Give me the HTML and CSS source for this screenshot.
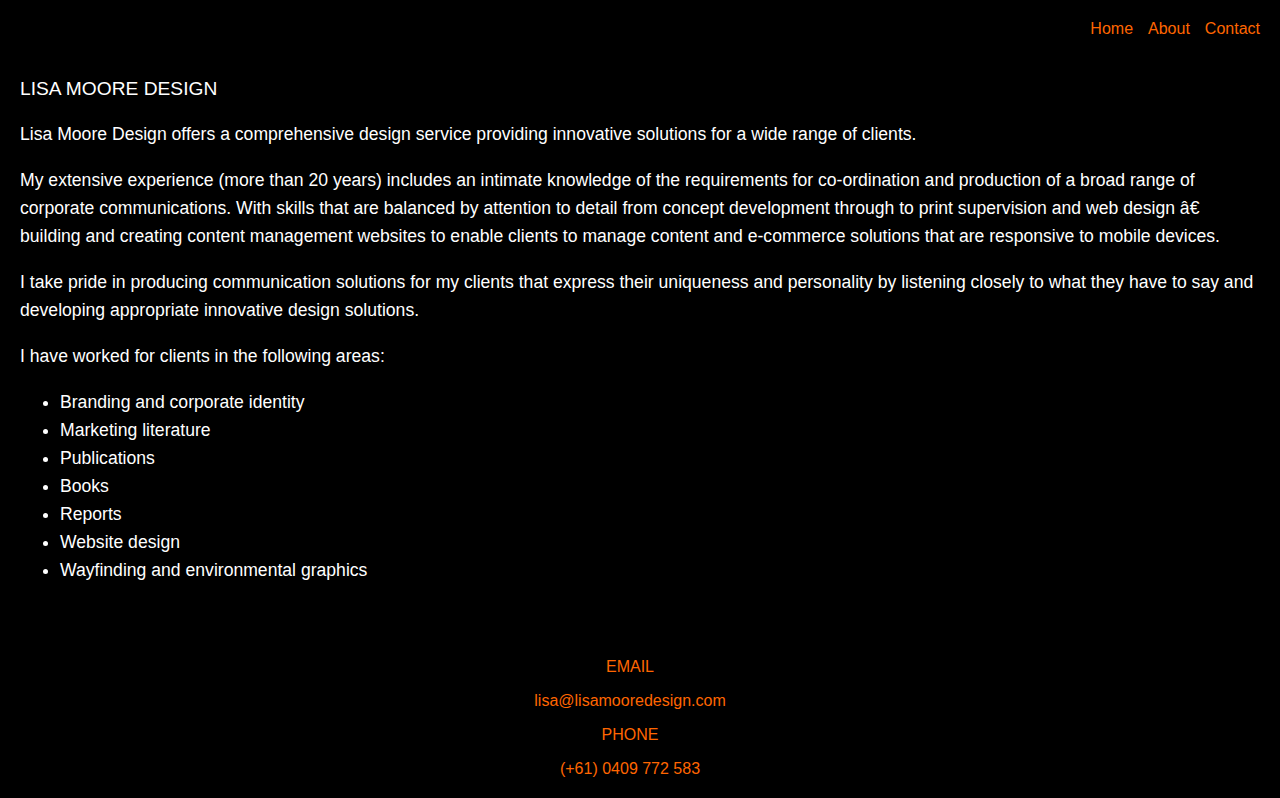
FILE: index.html
```html
<!DOCTYPE html>
<html lang="en">
<head>
<meta charset="utf-8">
<title>Lisa Moore Design</title>
<link rel="stylesheet" href="styles.css">
</head>
<body>
<header class="site-header">
  <nav class="nav">
    <a href="#">Home</a>
    <a href="#">About</a>
    <a href="#">Contact</a>
  </nav>
</header>
<main class="content">
  <h1 class="title">LISA MOORE DESIGN</h1>
  <p>Lisa Moore Design offers a comprehensive design service providing innovative solutions for a wide range of clients.</p>
  <p>My extensive experience (more than 20 years) includes an intimate knowledge of the requirements for co-ordination and production of a broad range of corporate communications. With skills that are balanced by attention to detail from concept development through to print supervision and web design â€ building and creating content management websites to enable clients to manage content and e-commerce solutions that are responsive to mobile devices.</p>
  <p>I take pride in producing communication solutions for my clients that express their uniqueness and personality by listening closely to what they have to say and developing appropriate innovative design solutions.</p>
  <p>I have worked for clients in the following areas:</p>
  <ul class="areas">
    <li>Branding and corporate identity</li>
    <li>Marketing literature</li>
    <li>Publications</li>
    <li>Books</li>
    <li>Reports</li>
    <li>Website design</li>
    <li>Wayfinding and environmental graphics</li>
  </ul>
</main>
<footer class="footer">
  <p>EMAIL</p>
  <p>lisa@lisamooredesign.com</p>
  <p>PHONE</p>
  <p>(+61) 0409 772 583</p>
</footer>
</body>
</html>
```

FILE: styles.css
```css
html, body {
  margin: 0;
  padding: 0;
  background: #000;
}
body {
  font-family: "Liberation Sans", Arial, sans-serif;
  color: #fff;
  padding: 0 20px;
}
.site-header {
  display: flex;
  justify-content: flex-end;
  padding-top: 20px;
  height: 42px;
}
.nav {
  display: flex;
  gap: 15px;
  font-size: 16px;
  line-height: 18px;
}
.nav a {
  color: #ff6600;
  text-decoration: none;
}
.content {
  font-size: 17.6px;
  line-height: 28px;
}
.title {
  font-size: 19.2px;
  font-weight: normal;
  line-height: 28px;
  margin: 13px 0 17px;
}
.content p {
  margin: 0 0 18px;
}
.areas {
  margin: 0;
  padding-left: 40px;
}
.footer {
  margin-top: 74px;
  padding-right: 20px;
  text-align: center;
  color: #ff6600;
  font-size: 16px;
  line-height: 18px;
}
.footer p {
  margin: 0 0 16px;
}
```
